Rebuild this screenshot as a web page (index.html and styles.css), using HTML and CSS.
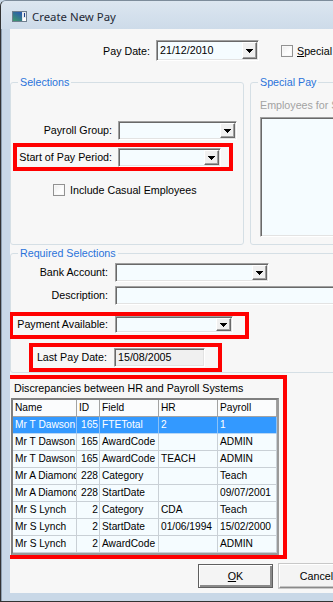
FILE: index.html
```html
<!DOCTYPE html>
<html lang="en">
<head>
    <meta charset="UTF-8">
    <title>Create New Pay</title>
    <link rel="stylesheet" href="styles.css">
</head>
<body>
    <div class="window">
        <div class="titlebar">
            <svg class="app-icon" width="15" height="11" viewBox="0 0 15 11">
                <defs>
                    <linearGradient id="iconGrad" x1="0" y1="1" x2="0.6" y2="0">
                        <stop offset="0" stop-color="#3f9a6a"/>
                        <stop offset="1" stop-color="#2c5fa8"/>
                    </linearGradient>
                </defs>
                <rect x="0.5" y="0.5" width="14" height="10" fill="#e4e9ee" stroke="#6f7f8f"/>
                <rect x="1" y="1" width="9" height="9" fill="url(#iconGrad)"/>
                <rect x="12" y="2" width="1" height="4" fill="#1d3f8a"/>
                <rect x="11" y="7" width="3" height="3" fill="#ffffff"/>
            </svg>
            <span class="title">Create New Pay</span>
        </div>

        <div class="client">
            <div class="pay-date-row">
                <label class="lbl lbl-paydate">Pay Date:</label>
                <div class="combo combo-paydate">
                    <span class="combo-value">21/12/2010</span>
                    <span class="drop-btn"><svg width="7" height="4" viewBox="0 0 7 4"><path d="M0 0h7v1H0zM1 1h5v1H1zM2 2h3v1H2zM3 3h1v1H3z" fill="#000"/></svg></span>
                </div>
                <span class="checkbox check-special"></span>
                <span class="check-label"><u>S</u>pecial</span>
            </div>

            <div class="groups-row">
                <div class="group group-selections">
                    <div class="group-title">Selections</div>
                    <div class="field-row row-payroll">
                        <label class="lbl lbl-payroll">Payroll Group:</label>
                        <div class="combo combo-payroll">
                            <span class="combo-value"></span>
                            <span class="drop-btn"><svg width="7" height="4" viewBox="0 0 7 4"><path d="M0 0h7v1H0zM1 1h5v1H1zM2 2h3v1H2zM3 3h1v1H3z" fill="#000"/></svg></span>
                        </div>
                    </div>
                    <div class="highlight hl-period">
                        <label class="lbl lbl-period">Start of Pay Period:</label>
                        <div class="combo combo-period">
                            <span class="combo-value"></span>
                            <span class="drop-btn"><svg width="7" height="4" viewBox="0 0 7 4"><path d="M0 0h7v1H0zM1 1h5v1H1zM2 2h3v1H2zM3 3h1v1H3z" fill="#000"/></svg></span>
                        </div>
                    </div>
                    <div class="check-row">
                        <span class="checkbox"></span>
                        <span class="check-label">Include Casual Employees</span>
                    </div>
                </div>

                <div class="group group-special">
                    <div class="group-title">Special Pay</div>
                    <div class="disabled-text">Employees for Special Pay</div>
                    <div class="listbox"></div>
                </div>
            </div>

            <div class="group group-required">
                <div class="group-title">Required Selections</div>
                <div class="field-row row-bank">
                    <label class="lbl lbl-req">Bank Account:</label>
                    <div class="combo combo-bank">
                        <span class="combo-value"></span>
                        <span class="drop-btn"><svg width="7" height="4" viewBox="0 0 7 4"><path d="M0 0h7v1H0zM1 1h5v1H1zM2 2h3v1H2zM3 3h1v1H3z" fill="#000"/></svg></span>
                    </div>
                </div>
                <div class="field-row row-desc">
                    <label class="lbl lbl-req">Description:</label>
                    <div class="textbox textbox-desc"></div>
                </div>
                <div class="highlight hl-payment">
                    <label class="lbl lbl-payment">Payment Available:</label>
                    <div class="combo combo-payment">
                        <span class="combo-value"></span>
                        <span class="drop-btn"><svg width="7" height="4" viewBox="0 0 7 4"><path d="M0 0h7v1H0zM1 1h5v1H1zM2 2h3v1H2zM3 3h1v1H3z" fill="#000"/></svg></span>
                    </div>
                </div>
                <div class="highlight hl-lastpay">
                    <label class="lbl lbl-lastpay">Last Pay Date:</label>
                    <div class="textbox textbox-readonly">15/08/2005</div>
                </div>
            </div>

            <div class="highlight hl-discrepancies">
                <div class="grid-title">Discrepancies between HR and Payroll Systems</div>
                <div class="grid">
                    <div class="grid-row grid-head">
                        <div class="cell">Name</div>
                        <div class="cell">ID</div>
                        <div class="cell">Field</div>
                        <div class="cell">HR</div>
                        <div class="cell">Payroll</div>
                    </div>
                    <div class="grid-row selected">
                        <div class="cell">Mr T Dawson</div>
                        <div class="cell num">165</div>
                        <div class="cell">FTETotal</div>
                        <div class="cell">2</div>
                        <div class="cell">1</div>
                    </div>
                    <div class="grid-row">
                        <div class="cell">Mr T Dawson</div>
                        <div class="cell num">165</div>
                        <div class="cell">AwardCode</div>
                        <div class="cell"></div>
                        <div class="cell">ADMIN</div>
                    </div>
                    <div class="grid-row">
                        <div class="cell">Mr T Dawson</div>
                        <div class="cell num">165</div>
                        <div class="cell">AwardCode</div>
                        <div class="cell">TEACH</div>
                        <div class="cell">ADMIN</div>
                    </div>
                    <div class="grid-row">
                        <div class="cell">Mr A Diamond</div>
                        <div class="cell num">228</div>
                        <div class="cell">Category</div>
                        <div class="cell"></div>
                        <div class="cell">Teach</div>
                    </div>
                    <div class="grid-row">
                        <div class="cell">Mr A Diamond</div>
                        <div class="cell num">228</div>
                        <div class="cell">StartDate</div>
                        <div class="cell"></div>
                        <div class="cell">09/07/2001</div>
                    </div>
                    <div class="grid-row">
                        <div class="cell">Mr S Lynch</div>
                        <div class="cell num">2</div>
                        <div class="cell">Category</div>
                        <div class="cell">CDA</div>
                        <div class="cell">Teach</div>
                    </div>
                    <div class="grid-row">
                        <div class="cell">Mr S Lynch</div>
                        <div class="cell num">2</div>
                        <div class="cell">StartDate</div>
                        <div class="cell">01/06/1994</div>
                        <div class="cell">15/02/2000</div>
                    </div>
                    <div class="grid-row">
                        <div class="cell">Mr S Lynch</div>
                        <div class="cell num">2</div>
                        <div class="cell">AwardCode</div>
                        <div class="cell"></div>
                        <div class="cell">ADMIN</div>
                    </div>
                </div>
            </div>

            <div class="button-row">
                <button class="btn btn-default"><u>O</u>K</button>
                <button class="btn">Cancel</button>
            </div>
        </div>
    </div>
</body>
</html>
```

FILE: styles.css
```css
:root {
    --frame: #c9d8e7;
    --client: #f7f7f7;
    --field: #f5fcff;
    --group-line: #d5dfe5;
    --group-text: #2a73da;
    --mark: #ff0000;
}

* {
    box-sizing: border-box;
    margin: 0;
    padding: 0;
}

body {
    font-family: "Liberation Sans", Arial, sans-serif;
    font-size: 10.7px;
    color: #000;
    background: var(--frame);
    overflow: hidden;
}

.window {
    width: 333px;
    height: 602px;
    display: flex;
    flex-direction: column;
    background: var(--frame);
    border-left: 1px solid #333;
    border-top: 1px solid #7d8c9b;
    border-bottom: 1px solid #333;
    border-top-left-radius: 6px;
    box-shadow: inset 1px 0 0 #8e9fb0;
    overflow: hidden;
}

/* title bar */
.titlebar {
    height: 28px;
    flex: none;
    display: flex;
    align-items: center;
    padding: 3px 0 0 11px;
    background: linear-gradient(#dce6f0, #cddbe9);
}

.app-icon {
    flex: none;
}

.title {
    margin-left: 5px;
    font-family: "Noto Sans", "Open Sans", sans-serif;
    font-size: 11.4px;
    color: #1f2a36;
}

/* dialog body */
.client {
    flex: none;
    height: 564px;
    margin-left: 9px;
    padding-top: 11px;
    background: var(--client);
    overflow: hidden;
}

.lbl {
    flex: none;
    text-align: right;
    white-space: nowrap;
}

.pay-date-row {
    display: flex;
    align-items: center;
    height: 21px;
    padding-left: 86px;
}

.lbl-paydate {
    width: 54px;
}

/* combo boxes and text boxes */
.combo,
.textbox,
.listbox {
    flex: none;
    border: 1px solid;
    border-color: #a0a0a0 #fff #fff #a0a0a0;
    box-shadow: inset 1px 1px 0 #696969, inset -1px -1px 0 #e3e3e3;
    background: var(--field);
}

.combo {
    display: flex;
    padding: 1px;
    height: 19px;
}

.combo-value {
    flex: 1;
    padding-left: 2px;
    white-space: nowrap;
    overflow: hidden;
}

.combo-paydate {
    margin-left: 6px;
    width: 103px;
    height: 21px;
}

.combo-paydate .combo-value {
    line-height: 17px;
}

.drop-btn {
    flex: none;
    width: 15px;
    display: flex;
    align-items: center;
    justify-content: center;
    background: #f0f0f0;
    border: 1px solid;
    border-color: #fff #696969 #696969 #fff;
    box-shadow: inset -1px -1px 0 #a0a0a0;
}

.textbox {
    height: 19px;
    padding: 0 3px;
    line-height: 17px;
    white-space: nowrap;
}

.textbox-readonly {
    margin-left: 7px;
    width: 91px;
    background: #f0f0f0;
}

.textbox-desc {
    margin-left: 7px;
    width: 300px;
}

/* checkboxes */
.checkbox {
    flex: none;
    display: inline-block;
    width: 12px;
    height: 12px;
    border: 1px solid #929292;
    background: linear-gradient(135deg, #ececec, #fdfdfd 60%);
    box-shadow: inset 0 0 0 1px #f8f8f8;
}

.check-special {
    margin-left: 22px;
}

.check-label {
    margin-left: 4px;
    white-space: nowrap;
}

/* group boxes */
.groups-row {
    display: flex;
    gap: 6px;
    margin-top: 21px;
    height: 163px;
}

.group {
    flex: none;
    border: 1px solid var(--group-line);
    border-radius: 3px;
}

.group-title {
    width: fit-content;
    height: 13px;
    margin: -7px 0 0 7px;
    padding: 0 2px;
    line-height: 13px;
    color: var(--group-text);
    background: var(--client);
    white-space: nowrap;
}

.group-selections {
    width: 234px;
}

.group-special {
    width: 160px;
}

.field-row {
    display: flex;
    height: 19px;
    line-height: 19px;
}

.row-payroll {
    margin-top: 32px;
}

.lbl-payroll {
    width: 101px;
}

.combo-payroll {
    margin-left: 6px;
    width: 119px;
}

.check-row {
    display: flex;
    align-items: center;
    margin-top: 13px;
    padding-left: 42px;
    height: 12px;
}

.check-row .check-label {
    margin-left: 5px;
}

.disabled-text {
    margin-top: 10px;
    padding-left: 9px;
    line-height: 13px;
    color: #a3a3a3;
    white-space: nowrap;
}

.listbox {
    margin: 5px 0 0 9px;
    width: 200px;
    height: 120px;
}

.group-required {
    margin-top: 8px;
    width: 380px;
}

.row-bank {
    margin-top: 3px;
}

.row-desc {
    margin-top: 4px;
}

.lbl-req {
    width: 97px;
}

.combo-bank {
    margin-left: 7px;
    width: 154px;
}

/* red annotation boxes */
.highlight {
    border: 4px solid var(--mark);
}

.hl-period {
    display: flex;
    align-items: flex-start;
    width: 220px;
    height: 28px;
    margin: 3px 0 0 2px;
}

.lbl-period {
    width: 95px;
    line-height: 20px;
}

.combo-period {
    margin: 1px 0 0 6px;
    width: 103px;
}

.hl-payment {
    display: flex;
    align-items: flex-start;
    width: 240px;
    height: 27px;
    margin: 7px 0 0 -2px;
}

.lbl-payment {
    width: 95px;
    line-height: 17px;
}

.combo-payment {
    margin-left: 7px;
    width: 118px;
    height: 17px;
}

.hl-lastpay {
    display: flex;
    align-items: flex-start;
    width: 193px;
    height: 29px;
    margin: 4px 0 0 18px;
    padding-top: 1px;
}

.lbl-lastpay {
    width: 74px;
    line-height: 19px;
}

.hl-discrepancies {
    width: 281px;
    height: 184px;
    margin: 2px 0 0 -4px;
}

.grid-title {
    height: 13px;
    margin-top: 3px;
    padding-left: 4px;
    line-height: 13px;
    white-space: nowrap;
}

/* data grid */
.grid {
    width: 268px;
    margin: 3px 0 0 1px;
    border: 2px solid;
    border-color: #7f7f7f #9a9a9a #9a9a9a #7f7f7f;
    background: var(--field);
    font-size: 10.2px;
}

.grid-row {
    display: grid;
    grid-template-columns: 64px 23px 59px 59px 59px;
    height: 17px;
}

.cell {
    padding: 0 1px 0 2px;
    line-height: 16px;
    border-right: 1px solid #c9d0d6;
    border-bottom: 1px solid #c9d0d6;
    white-space: nowrap;
    overflow: hidden;
}

.cell.num {
    text-align: right;
    padding: 0 1px 0 0;
}

.grid-head .cell {
    background: #fbfcfd;
    border-color: #a3a3a3;
}

.grid-row.selected .cell {
    background: #3399ff;
    color: #fff;
    border-right-color: #8cc2f7;
    border-bottom-color: #b8d7f5;
}

/* dialog buttons */
.button-row {
    display: flex;
    gap: 6px;
    margin-top: 5px;
    padding-left: 188px;
}

.btn {
    flex: none;
    width: 75px;
    height: 24px;
    font: inherit;
    color: #000;
    background: #f4f4f4;
    border: 1px solid;
    border-color: #fff #8a8a8a #8a8a8a #fff;
    box-shadow: inset -1px -1px 0 #c4c4c4, 0 0 0 1px #c8c8c8;
}

.btn-default {
    border-color: #5f5f5f;
    box-shadow: inset 1px 1px 0 #fff, inset -2px -2px 0 #8a8a8a;
}
```
